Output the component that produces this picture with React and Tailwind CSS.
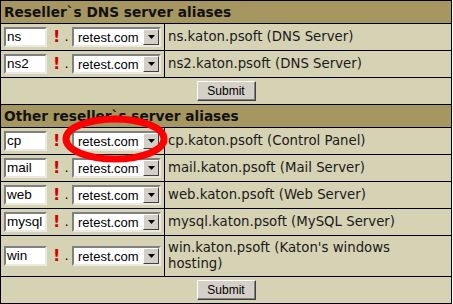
import React from 'react'

const dns = [
  { name: 'ns', label: 'ns.katon.psoft (DNS Server)' },
  { name: 'ns2', label: 'ns2.katon.psoft (DNS Server)' },
]

const others = [
  { name: 'cp', label: 'cp.katon.psoft (Control Panel)' },
  { name: 'mail', label: 'mail.katon.psoft (Mail Server)' },
  { name: 'web', label: 'web.katon.psoft (Web Server)' },
  { name: 'mysql', label: 'mysql.katon.psoft (MySQL Server)' },
  { name: 'win', label: "win.katon.psoft (Katon's windows hosting)", tall: true },
]

function TextBox({ value }) {
  return (
    <div className="w-[43px] h-[20px] bg-white border-2 border-t-[#808080] border-l-[#808080] border-b-[#eceae0] border-r-[#eceae0] flex items-center pl-px text-[13.5px] leading-none text-black font-['Liberation_Sans',Arial,sans-serif]">
      {value}
    </div>
  )
}

function Select() {
  return (
    <div className="w-[89px] h-[20px] bg-white border-2 border-t-[#808080] border-l-[#808080] border-b-[#eceae0] border-r-[#eceae0] flex items-center">
      <span className="flex-1 pl-[4px] whitespace-nowrap text-[13px] leading-none text-black font-['Liberation_Sans',Arial,sans-serif]">retest.com</span>
      <div className="w-[16px] h-[16px] shrink-0 bg-[#d4d0c8] border border-t-white border-l-white border-b-[#404040] border-r-[#404040] flex items-center justify-center">
        <svg width="7" height="4" viewBox="0 0 7 4"><path d="M0 0h7L3.5 4z" fill="#000" /></svg>
      </div>
    </div>
  )
}

function Row({ item }) {
  return (
    <div className={`flex border-b border-black ${item.tall ? 'h-[41px]' : 'h-[27px]'}`}>
      <div className="w-[164px] shrink-0 border-r border-black flex items-center pl-[3px]">
        <TextBox value={item.name} />
        <span className="ml-[6px] w-[6px] text-[#d00000] font-bold text-[16px] leading-none font-['DejaVu_Sans',sans-serif]">!</span>
        <span className="ml-[6px] w-[7px] text-black text-[12px] leading-none">.</span>
        <Select />
      </div>
      <div className="flex-1 flex items-center pl-[3px] pr-[50px] text-[13.3px] leading-[16px] text-[#1a1a1a] font-['DejaVu_Sans',Verdana,sans-serif]">
        {item.label}
      </div>
    </div>
  )
}

function Header({ children }) {
  return (
    <div className="h-[23px] bg-[#a69660] border-b border-black flex items-center pl-[3px] text-[13.7px] font-bold text-[#111] font-['DejaVu_Sans',Verdana,sans-serif]">
      {children}
    </div>
  )
}

function SubmitRow({ last }) {
  return (
    <div className={`flex items-center justify-center ${last ? 'h-[26px]' : 'h-[27px] border-b border-black'}`}>
      <button className="w-[59px] h-[20px] bg-[#d4d0c8] border border-t-white border-l-white border-b-[#404040] border-r-[#404040] shadow-[inset_-1px_-1px_0_#808080] text-[12px] leading-none text-black font-['Liberation_Sans',Arial,sans-serif]">
        Submit
      </button>
    </div>
  )
}

export default function App() {
  return (
    <div className="relative w-[453px] h-[304px] bg-white">
      <div className="w-[452px] border border-black bg-[#d6d2b4]">
        <Header>Reseller`s DNS server aliases</Header>
        {dns.map(d => <Row key={d.name} item={d} />)}
        <SubmitRow />
        <Header>Other reseller`s server aliases</Header>
        {others.map(d => <Row key={d.name} item={d} />)}
        <SubmitRow last />
      </div>
      <svg className="absolute left-[61px] top-[114px]" width="110" height="52" viewBox="0 0 110 52">
        <ellipse cx="54" cy="25" rx="49" ry="20" fill="none" stroke="#ff0000" strokeWidth="7" />
      </svg>
    </div>
  )
}
